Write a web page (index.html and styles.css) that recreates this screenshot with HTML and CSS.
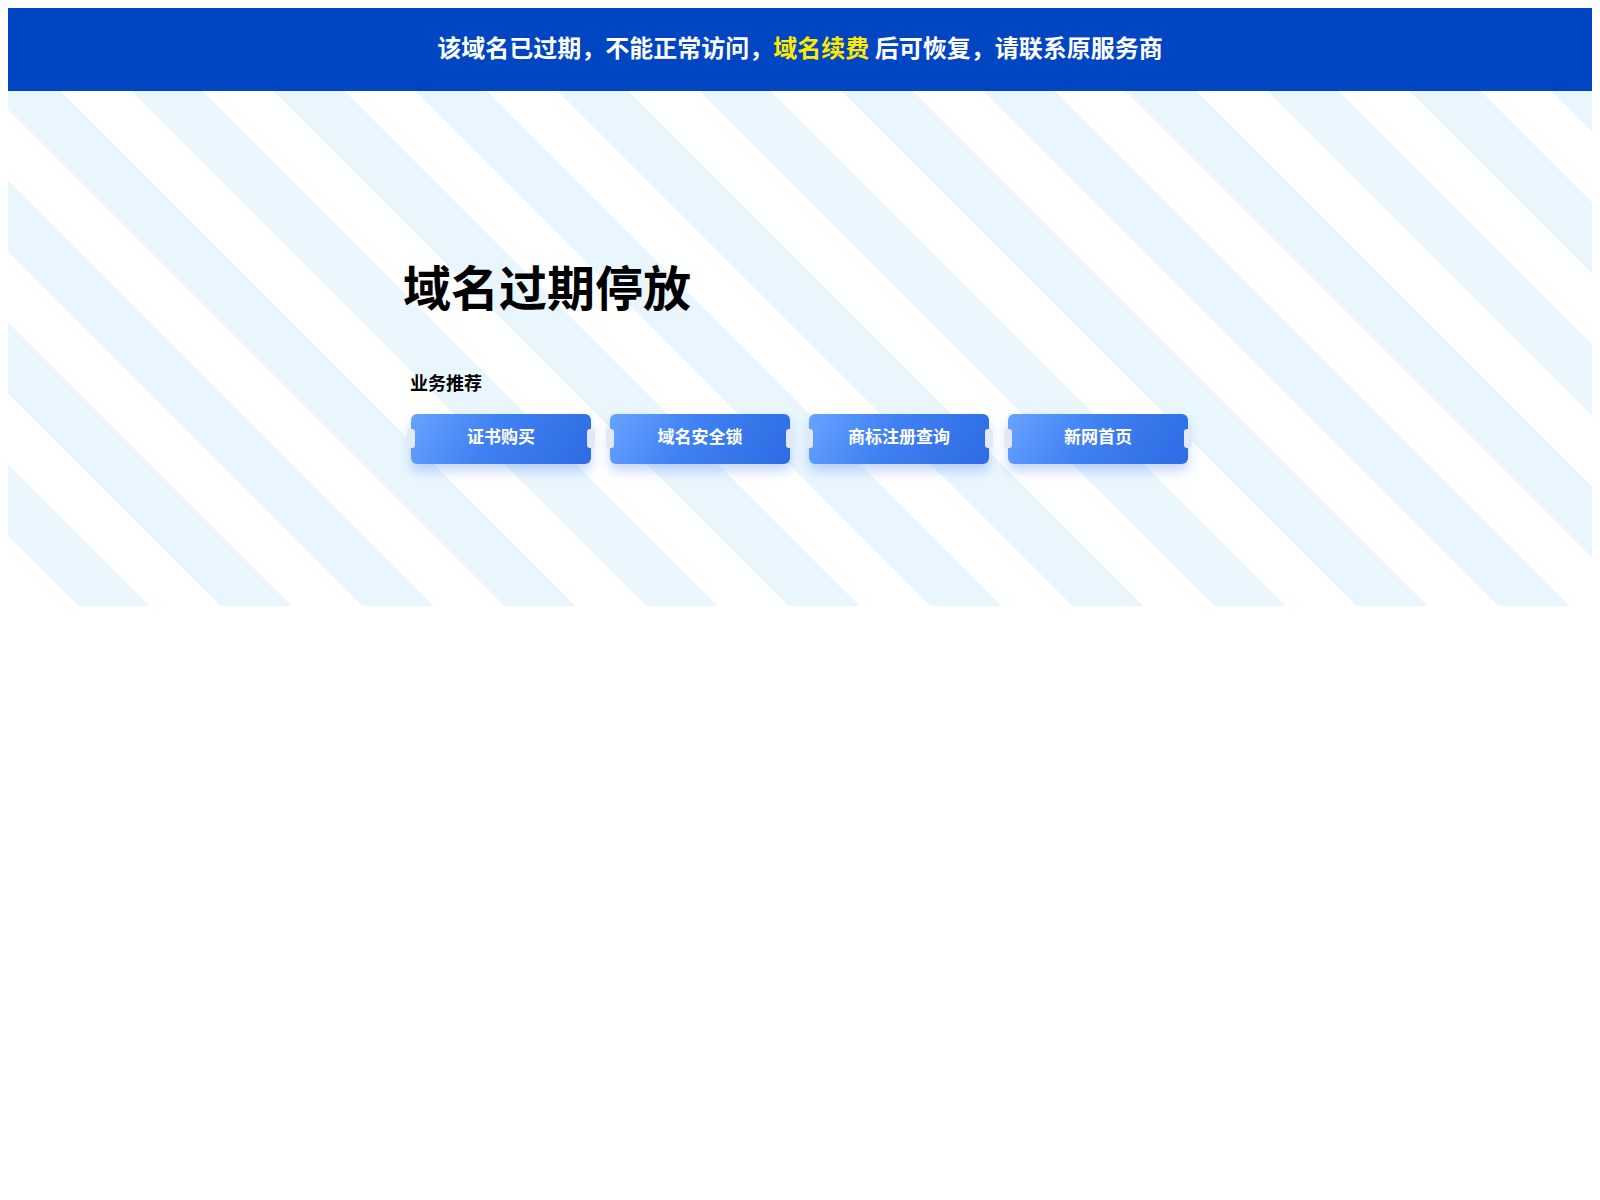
FILE: index.html
```html
<!DOCTYPE html>
<html lang="zh-CN">
<head>
    <meta charset="UTF-8">
    <meta name="viewport" content="width=device-width, initial-scale=1.0">
    <title>域名过期停放</title>
    <link rel="stylesheet" href="styles.css">
</head>
<body>
    <div class="notice">
        该域名已过期，不能正常访问，<a href="javascript:;" class="renew">域名续费</a> 后可恢复，请联系原服务商
    </div>
    <div class="park">
        <div class="inner">
            <h1 class="title">域名过期停放</h1>
            <div class="recommend">
                <h3>业务推荐</h3>
                <div class="links">
                    <a href="javascript:;" class="btn">证书购买</a>
                    <a href="javascript:;" class="btn">域名安全锁</a>
                    <a href="javascript:;" class="btn">商标注册查询</a>
                    <a href="javascript:;" class="btn">新网首页</a>
                </div>
            </div>
        </div>
    </div>
</body>
</html>
```

FILE: styles.css
```css
*, *:before, *:after {
    box-sizing: border-box;
}

:root {
    --navy: #0045c1;
    --yellow: #ffea00;
    --stripe: #e9f6fd;
    --white: #fff;
    --black: #000;
    --btn-light: #67a3ff;
    --btn-dark: #2d6ce3;
}

body {
    font-family: "Noto Sans CJK SC", "Noto Sans", sans-serif;
    color: var(--black);
}

a {
    text-decoration: none;
}

.notice {
    height: 83px;
    padding-bottom: 5px;
    background-color: var(--navy);
    color: var(--white);
    font-size: 24px;
    font-weight: 700;
    line-height: 78px;
    text-align: center;
    .renew {
        color: var(--yellow);
    }
}

/* diagonal stripes, one 142px tile per period */
.park {
    height: 515px;
    padding: 170px 0 142px;
    background-color: var(--white);
    background-image: linear-gradient(45deg,
        var(--stripe) 25%, transparent 25%, transparent 50%,
        var(--stripe) 50%, var(--stripe) 75%, transparent 75%, transparent);
    background-size: 142px 142px;
    background-position: -18px 0;
}

.inner {
    width: 800px;
    margin: 0 auto;
}

.title {
    margin: 0 0 64px;
    padding-left: 3px;
    font-size: 48px;
    line-height: 48px;
    font-weight: 700;
}

.recommend {
    padding: 0 10px;
    h3 {
        margin: 0 0 23px;
        font-size: 18px;
        line-height: 18px;
        font-weight: 700;
    }
}

.links {
    display: flex;
    gap: 19px;
    padding-left: 1px;
}

.btn {
    position: relative;
    width: 180px;
    height: 50px;
    padding-bottom: 7px;
    display: flex;
    align-items: center;
    justify-content: center;
    border-radius: 6px;
    background-image: linear-gradient(120deg, var(--btn-light) 0%, #3f80f2 45%, var(--btn-dark) 100%);
    box-shadow: 0 7px 12px rgba(45, 108, 227, 0.28);
    color: var(--white);
    font-size: 17px;
    font-weight: 700;
    /* ticket notches on both sides */
    &:before, &:after {
        content: '';
        position: absolute;
        top: 15px;
        width: 8px;
        height: 19px;
        border-radius: 3px;
        background-color: #e2e9f4;
    }
    &:before {
        left: -4px;
    }
    &:after {
        right: -4px;
    }
}
```
